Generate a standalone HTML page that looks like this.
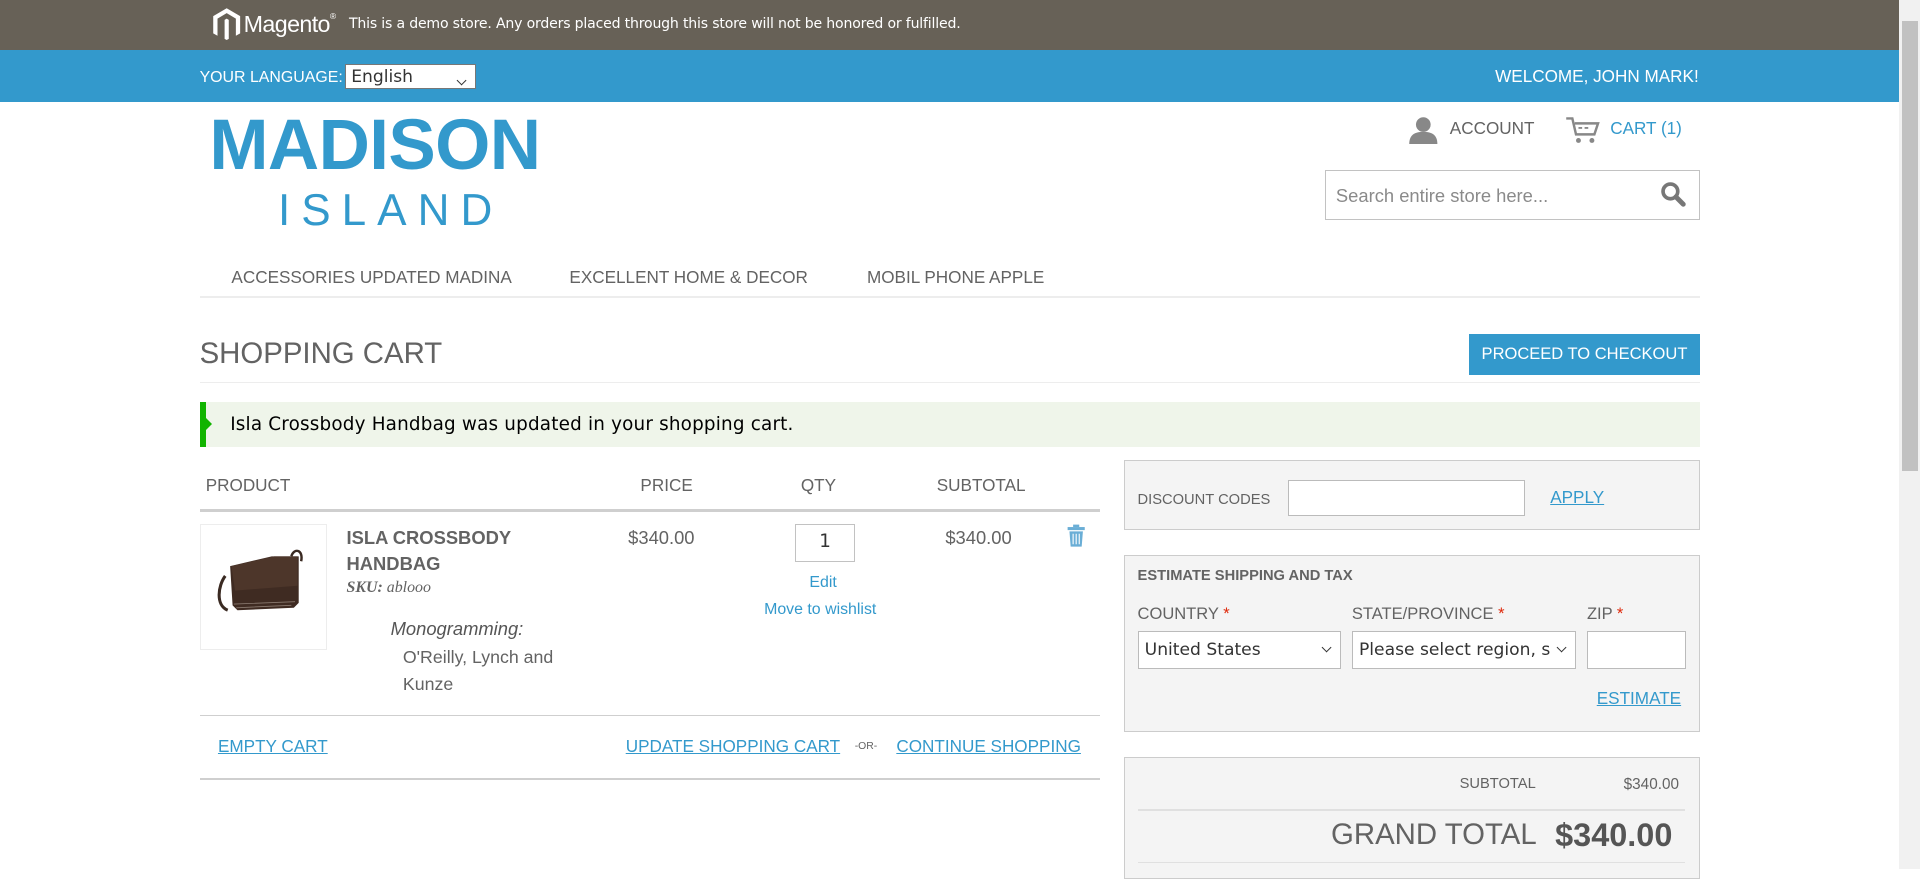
<!DOCTYPE html>
<html><head><meta charset="utf-8">
<style>
html{zoom:1.2245}
body{margin:0;width:1568px;height:710px;overflow:hidden;position:relative;background:#fff;font-family:"Liberation Sans",sans-serif;color:#636363}
.a{position:absolute;white-space:nowrap}
.blue{color:#3399cc}
.u{text-decoration:underline}
.line{position:absolute;height:1px;background:#e6e6e6}
.box{position:absolute;background:#f4f4f4;border:1px solid #cccccc;box-sizing:border-box}
.inp{position:absolute;background:#fff;border:1px solid #c4c4c4;box-sizing:border-box}
.sel{position:absolute;background:#fff;border:1px solid #aaa;box-sizing:border-box;font-family:"DejaVu Sans",sans-serif;font-size:14px;color:#333;padding:7px 0 0 5px;overflow:hidden;white-space:nowrap}
.sel:after{content:"";position:absolute;right:8px;top:10px;width:5px;height:5px;border-right:1.5px solid #333;border-bottom:1.5px solid #333;transform:rotate(45deg)}
</style></head><body>
<div class="a" style="left:0;top:0;width:1551px;height:41px;background:#676157"></div>
<svg class="a" style="left:173px;top:6px" width="24" height="28" viewBox="0 0 24 28"><path d="M12 1 L23 7.5 V21.5 L19.5 23.5 V9.5 L12 5 L4.5 9.5 V23.5 L1 21.5 V7.5 Z M10.3 10.5 L12 9.5 L13.7 10.5 V26 L12 27 L10.3 26 Z" fill="#fff"/></svg>
<div class="a" style="left:199px;top:9px;font-size:19px;color:#fff;letter-spacing:-0.5px">Magento<span style="font-size:7px;vertical-align:top">®</span></div>
<div class="a" style="left:285px;top:13px;font-size:11.5px;color:#fff;font-family:'DejaVu Sans',sans-serif;letter-spacing:-0.15px">This is a demo store. Any orders placed through this store will not be honored or fulfilled.</div>
<div class="a" style="left:0;top:41px;width:1551px;height:42px;background:#3399cc"></div>
<div class="a" style="left:163px;top:56px;font-size:13px;color:#fff">YOUR LANGUAGE:</div>
<div class="sel" style="left:282px;top:52px;width:107px;height:21px;font-size:14px;padding:2px 0 0 4px;border-color:#777">English</div>
<div class="a" style="left:1221px;top:54px;font-size:14px;color:#fff">WELCOME, JOHN MARK!</div>
<div class="a" style="left:1551px;top:0;width:17px;height:710px;background:#f1f1f1"></div>
<div class="a" style="left:1553px;top:17px;width:13px;height:368px;background:#c1c1c1"></div>

<div class="a blue" style="left:171px;top:86px;font-size:58px;font-weight:bold;letter-spacing:-0.5px">MADISON</div>
<div class="a blue" style="left:227px;top:152px;font-size:36px;letter-spacing:9px;font-weight:300">ISLAND</div>

<svg class="a" style="left:1150px;top:95px" width="25" height="23" viewBox="0 0 25 23"><circle cx="12.5" cy="7" r="6" fill="#888"/><path d="M1 23 C1 15 6 13 12.5 13 C19 13 24 15 24 23 Z" fill="#888"/></svg>
<div class="a" style="left:1184px;top:96px;font-size:14px">ACCOUNT</div>
<svg class="a" style="left:1278px;top:95px" width="29" height="24" viewBox="0 0 29 24"><path d="M1 2 H6 L9 15 H24 L27 6 H8" fill="none" stroke="#888" stroke-width="2"/><rect x="11" y="9" width="3" height="1.5" fill="#888"/><rect x="16" y="9" width="3" height="1.5" fill="#888"/><circle cx="11" cy="20" r="2" fill="#888"/><circle cx="22" cy="20" r="2" fill="#888"/></svg>
<div class="a blue" style="left:1315px;top:96px;font-size:14px">CART (1)</div>
<div class="inp" style="left:1082px;top:139px;width:306px;height:41px;border-color:#c2c2c2"></div>
<div class="a" style="left:1091px;top:151px;font-size:15px;color:#8a8a8a">Search entire store here...</div>
<svg class="a" style="left:1356px;top:148px" width="22" height="22" viewBox="0 0 22 22"><circle cx="8.5" cy="8.5" r="6" fill="none" stroke="#777" stroke-width="3"/><path d="M13 13 L19 19" stroke="#777" stroke-width="4" stroke-linecap="round"/></svg>

<div class="a" style="left:189px;top:218px;font-size:14px">ACCESSORIES UPDATED MADINA</div>
<div class="a" style="left:465px;top:218px;font-size:14px">EXCELLENT HOME &amp; DECOR</div>
<div class="a" style="left:708px;top:218px;font-size:14px">MOBIL PHONE APPLE</div>
<div class="line" style="left:163px;top:242px;width:1225px;background:#ededed"></div>

<div class="a" style="left:163px;top:275px;font-size:24px">SHOPPING CART</div>
<div class="a" style="left:1200px;top:273px;width:188px;height:33px;background:#3399cc;color:#fff;font-size:13.5px;text-align:center;line-height:33px">PROCEED TO CHECKOUT</div>
<div class="line" style="left:163px;top:312px;width:1225px;background:#ededed"></div>

<div class="a" style="left:163px;top:328px;width:1225px;height:37px;background:#eff5ea"></div>
<div class="a" style="left:163px;top:328px;width:5px;height:37px;background:#11b400"></div>
<div class="a" style="left:168px;top:341px;width:0;height:0;border-top:5px solid transparent;border-bottom:5px solid transparent;border-left:5px solid #11b400"></div>
<div class="a" style="left:188px;top:338px;font-size:15px;color:#000;font-family:'DejaVu Sans',sans-serif;letter-spacing:0.15px">Isla Crossbody Handbag was updated in your shopping cart.</div>

<div class="a" style="left:168px;top:388px;font-size:14px">PRODUCT</div>
<div class="a" style="left:523px;top:388px;font-size:14px">PRICE</div>
<div class="a" style="left:654px;top:388px;font-size:14px">QTY</div>
<div class="a" style="left:765px;top:388px;font-size:14px">SUBTOTAL</div>
<div class="line" style="left:163px;top:416px;width:735px;height:2px;background:#cfcfcf"></div>

<div class="a" style="left:163px;top:428px;width:104px;height:103px;border:1px solid #ededed;box-sizing:border-box"></div>
<svg class="a" style="left:174px;top:448px" width="86" height="62" viewBox="0 0 86 62"><path d="M12 50 C2 46 4 30 10 22" fill="none" stroke="#3a2a22" stroke-width="2.5"/><path d="M14 14 L48 6 L70 6 L70 44 L66 48 L20 50 L16 46 Z" fill="#3f2b22"/><path d="M15 14 L50 6 L69 6 L69 30 L18 34 Z" fill="#4d362a"/><path d="M17 45 L67 43 M19 48 L64 46" stroke="#8a7a70" stroke-width="0.7"/><path d="M64 6 C66 -1 74 0 72 10" fill="none" stroke="#3a2a22" stroke-width="2"/></svg>
<div class="a" style="left:283px;top:429px;font-size:15px;font-weight:bold;line-height:21px;color:#636363">ISLA CROSSBODY<br>HANDBAG</div>
<div class="a" style="left:283px;top:473px;font-size:13px;font-family:'Liberation Serif',serif;font-style:italic;color:#636363"><b>SKU:</b> ablooo</div>
<div class="a" style="left:319px;top:505px;font-size:15px;font-style:italic;color:#555">Monogramming:</div>
<div class="a" style="left:329px;top:526px;font-size:14.5px;line-height:22px;color:#636363">O'Reilly, Lynch and<br>Kunze</div>
<div class="a" style="left:513px;top:430px;font-size:15px">$340.00</div>
<div class="inp" style="left:649px;top:428px;width:49px;height:31px;border-color:#c2c2c2"></div>
<div class="a" style="left:669px;top:434px;font-size:15px;color:#333;font-family:'DejaVu Sans',sans-serif">1</div>
<div class="a blue" style="left:661px;top:469px;font-size:13px">Edit</div>
<div class="a blue" style="left:624px;top:491px;font-size:13px">Move to wishlist</div>
<div class="a" style="left:772px;top:430px;font-size:15px">$340.00</div>
<svg class="a" style="left:871px;top:428px" width="15" height="19" viewBox="0 0 15 19"><rect x="5" y="0.5" width="5" height="2" fill="#6aaed6"/><rect x="0.5" y="2.5" width="14" height="2.5" fill="#6aaed6"/><path d="M2 6 H13 L12 18.5 H3 Z" fill="#6aaed6"/><path d="M5 8 V16.5 M7.5 8 V16.5 M10 8 V16.5" stroke="#fff" stroke-width="0.9"/></svg>
<div class="line" style="left:163px;top:584px;width:735px;background:#cfcfcf"></div>
<div class="a blue u" style="left:178px;top:601px;font-size:14px">EMPTY CART</div>
<div class="a blue u" style="left:511px;top:601px;font-size:14px">UPDATE SHOPPING CART</div>
<div class="a" style="left:698px;top:605px;font-size:8.5px">-OR-</div>
<div class="a blue u" style="left:732px;top:601px;font-size:14px">CONTINUE SHOPPING</div>
<div class="line" style="left:163px;top:635px;width:735px;height:2px;background:#cfcfcf"></div>

<div class="box" style="left:918px;top:376px;width:470px;height:57px"></div>
<div class="a" style="left:929px;top:402px;font-size:12px">DISCOUNT CODES</div>
<div class="inp" style="left:1052px;top:392px;width:193px;height:29px;border-color:#bbb"></div>
<div class="a blue u" style="left:1266px;top:398px;font-size:14px">APPLY</div>

<div class="box" style="left:918px;top:453px;width:470px;height:145px"></div>
<div class="a" style="left:929px;top:464px;font-size:12px;font-weight:bold">ESTIMATE SHIPPING AND TAX</div>
<div class="a" style="left:929px;top:493px;font-size:13.5px">COUNTRY <span style="color:#df280a">*</span></div>
<div class="a" style="left:1104px;top:493px;font-size:13.5px">STATE/PROVINCE <span style="color:#df280a">*</span></div>
<div class="a" style="left:1296px;top:493px;font-size:13.5px">ZIP <span style="color:#df280a">*</span></div>
<div class="sel" style="left:929px;top:515px;width:166px;height:31px;border-color:#bbb">United States</div>
<div class="sel" style="left:1104px;top:515px;width:183px;height:31px;border-color:#bbb;padding-right:22px">Please select region, s</div>
<div class="inp" style="left:1296px;top:515px;width:81px;height:31px;border-color:#bbb"></div>
<div class="a blue u" style="left:1304px;top:562px;font-size:14px">ESTIMATE</div>

<div class="box" style="left:918px;top:618px;width:470px;height:100px"></div>
<div class="a" style="left:1192px;top:634px;font-size:12px">SUBTOTAL</div>
<div class="a" style="left:1326px;top:634px;font-size:12.5px">$340.00</div>
<div class="line" style="left:929px;top:661px;width:447px;background:#e0e0e0"></div>
<div class="a" style="left:1087px;top:668px;font-size:24px">GRAND TOTAL</div>
<div class="a" style="left:1270px;top:667px;font-size:26.5px;font-weight:bold;color:#555">$340.00</div>
<div class="line" style="left:929px;top:704px;width:447px;background:#e0e0e0"></div>
</body></html>
